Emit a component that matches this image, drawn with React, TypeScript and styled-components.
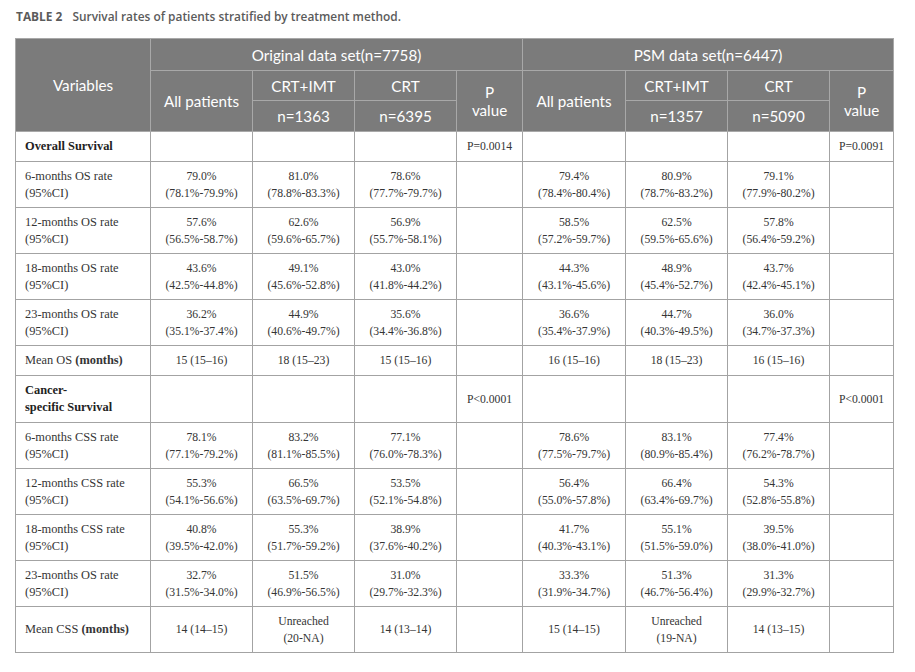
import * as React from "react"
import styled, { createGlobalStyle } from "styled-components"

const GlobalStyle = createGlobalStyle`
    html, body {
        margin: 0;
        padding: 0;
        background: #fff;
    }
`

const Page = styled.div`
    padding: 9px 22px 0 15px;
    display: flex;
    flex-direction: column;
    gap: 14px;
`

const Caption = styled.div`
    font-family: "Open Sans", Lato, sans-serif;
    font-size: 11.9px;
    line-height: 15px;
    font-weight: 600;
    color: #5b5b5b;
    padding-left: 1px;

    b {
        font-weight: 700;
        margin-right: 7px;
    }
`

const Table = styled.table`
    border-collapse: collapse;
    table-layout: fixed;
    width: 878px;
`

const HeadRow = styled.tr<{ $h: number }>`
    height: ${(p) => p.$h}px;
`

const HeadCell = styled.th`
    background: #7b7b7b;
    color: #fff;
    border: 1px solid #a8a8a8;
    font-family: Lato, "Open Sans", sans-serif;
    font-size: 15.2px;
    font-weight: 400;
    line-height: 18px;
    text-align: center;
    vertical-align: middle;
    padding: 0 4px;
`

const BodyRow = styled.tr<{ $h: number }>`
    height: ${(p) => p.$h}px;
`

const Cell = styled.td`
    border: 1px solid #a3a3a3;
    font-family: "Liberation Serif", "Times New Roman", serif;
    font-size: 11.7px;
    line-height: 17px;
    color: #353535;
    text-align: center;
    vertical-align: middle;
    padding: 0 4px;
`

const LabelCell = styled(Cell)<{ $bold?: boolean }>`
    text-align: left;
    padding: 0 9px;
    font-size: 12.4px;
    font-weight: ${(p) => (p.$bold ? 700 : 400)};
    color: ${(p) => (p.$bold ? "#222" : "#353535")};
`

type Row = {
    label: React.ReactNode
    bold?: boolean
    h: number
    cells: (React.ReactNode | null)[]
}

const v = (a: string, b: string) => (
    <>
        {a}
        <br />
        {b}
    </>
)

const rate = (s: string) => v(s, "(95%CI)")

const rows: Row[] = [
    { label: "Overall Survival", bold: true, h: 30, cells: [null, null, null, "P=0.0014", null, null, null, "P=0.0091"] },
    {
        label: rate("6-months OS rate"), h: 46, cells: [
            v("79.0%", "(78.1%-79.9%)"), v("81.0%", "(78.8%-83.3%)"), v("78.6%", "(77.7%-79.7%)"), null,
            v("79.4%", "(78.4%-80.4%)"), v("80.9%", "(78.7%-83.2%)"), v("79.1%", "(77.9%-80.2%)"), null,
        ]
    },
    {
        label: rate("12-months OS rate"), h: 46, cells: [
            v("57.6%", "(56.5%-58.7%)"), v("62.6%", "(59.6%-65.7%)"), v("56.9%", "(55.7%-58.1%)"), null,
            v("58.5%", "(57.2%-59.7%)"), v("62.5%", "(59.5%-65.6%)"), v("57.8%", "(56.4%-59.2%)"), null,
        ]
    },
    {
        label: rate("18-months OS rate"), h: 46, cells: [
            v("43.6%", "(42.5%-44.8%)"), v("49.1%", "(45.6%-52.8%)"), v("43.0%", "(41.8%-44.2%)"), null,
            v("44.3%", "(43.1%-45.6%)"), v("48.9%", "(45.4%-52.7%)"), v("43.7%", "(42.4%-45.1%)"), null,
        ]
    },
    {
        label: rate("23-months OS rate"), h: 46, cells: [
            v("36.2%", "(35.1%-37.4%)"), v("44.9%", "(40.6%-49.7%)"), v("35.6%", "(34.4%-36.8%)"), null,
            v("36.6%", "(35.4%-37.9%)"), v("44.7%", "(40.3%-49.5%)"), v("36.0%", "(34.7%-37.3%)"), null,
        ]
    },
    {
        label: <>Mean OS <b>(months)</b></>, h: 30, cells: [
            "15 (15–16)", "18 (15–23)", "15 (15–16)", null,
            "16 (15–16)", "18 (15–23)", "16 (15–16)", null,
        ]
    },
    { label: v("Cancer-", "specific Survival"), bold: true, h: 47, cells: [null, null, null, "P<0.0001", null, null, null, "P<0.0001"] },
    {
        label: rate("6-months CSS rate"), h: 46, cells: [
            v("78.1%", "(77.1%-79.2%)"), v("83.2%", "(81.1%-85.5%)"), v("77.1%", "(76.0%-78.3%)"), null,
            v("78.6%", "(77.5%-79.7%)"), v("83.1%", "(80.9%-85.4%)"), v("77.4%", "(76.2%-78.7%)"), null,
        ]
    },
    {
        label: rate("12-months CSS rate"), h: 46, cells: [
            v("55.3%", "(54.1%-56.6%)"), v("66.5%", "(63.5%-69.7%)"), v("53.5%", "(52.1%-54.8%)"), null,
            v("56.4%", "(55.0%-57.8%)"), v("66.4%", "(63.4%-69.7%)"), v("54.3%", "(52.8%-55.8%)"), null,
        ]
    },
    {
        label: rate("18-months CSS rate"), h: 46, cells: [
            v("40.8%", "(39.5%-42.0%)"), v("55.3%", "(51.7%-59.2%)"), v("38.9%", "(37.6%-40.2%)"), null,
            v("41.7%", "(40.3%-43.1%)"), v("55.1%", "(51.5%-59.0%)"), v("39.5%", "(38.0%-41.0%)"), null,
        ]
    },
    {
        label: rate("23-months OS rate"), h: 46, cells: [
            v("32.7%", "(31.5%-34.0%)"), v("51.5%", "(46.9%-56.5%)"), v("31.0%", "(29.7%-32.3%)"), null,
            v("33.3%", "(31.9%-34.7%)"), v("51.3%", "(46.7%-56.4%)"), v("31.3%", "(29.9%-32.7%)"), null,
        ]
    },
    {
        label: <>Mean CSS <b>(months)</b></>, h: 46, cells: [
            "14 (14–15)", v("Unreached", "(20-NA)"), "14 (13–14)", null,
            "15 (14–15)", v("Unreached", "(19-NA)"), "14 (13–15)", null,
        ]
    },
]

const colWidths = [135, 102, 102, 102, 66, 103, 102, 102, 64]

const App: React.FunctionComponent = () => {
    return <>
        <GlobalStyle />
        <Page>
            <Caption><b>TABLE 2</b> Survival rates of patients stratified by treatment method.</Caption>
            <Table>
                <colgroup>
                    {colWidths.map((w, i) => <col key={i} style={{ width: w }} />)}
                </colgroup>
                <thead>
                    <HeadRow $h={32}>
                        <HeadCell rowSpan={3}>Variables</HeadCell>
                        <HeadCell colSpan={4}>Original data set(n=7758)</HeadCell>
                        <HeadCell colSpan={4}>PSM data set(n=6447)</HeadCell>
                    </HeadRow>
                    <HeadRow $h={30}>
                        <HeadCell rowSpan={2}>All patients</HeadCell>
                        <HeadCell>CRT+IMT</HeadCell>
                        <HeadCell>CRT</HeadCell>
                        <HeadCell rowSpan={2}>P<br />value</HeadCell>
                        <HeadCell rowSpan={2}>All patients</HeadCell>
                        <HeadCell>CRT+IMT</HeadCell>
                        <HeadCell>CRT</HeadCell>
                        <HeadCell rowSpan={2}>P<br />value</HeadCell>
                    </HeadRow>
                    <HeadRow $h={31}>
                        <HeadCell>n=1363</HeadCell>
                        <HeadCell>n=6395</HeadCell>
                        <HeadCell>n=1357</HeadCell>
                        <HeadCell>n=5090</HeadCell>
                    </HeadRow>
                </thead>
                <tbody>
                    {rows.map((r, i) => (
                        <BodyRow key={i} $h={r.h}>
                            <LabelCell $bold={r.bold}>{r.label}</LabelCell>
                            {r.cells.map((c, j) => <Cell key={j}>{c}</Cell>)}
                        </BodyRow>
                    ))}
                </tbody>
            </Table>
        </Page>
    </>
}

export default App
